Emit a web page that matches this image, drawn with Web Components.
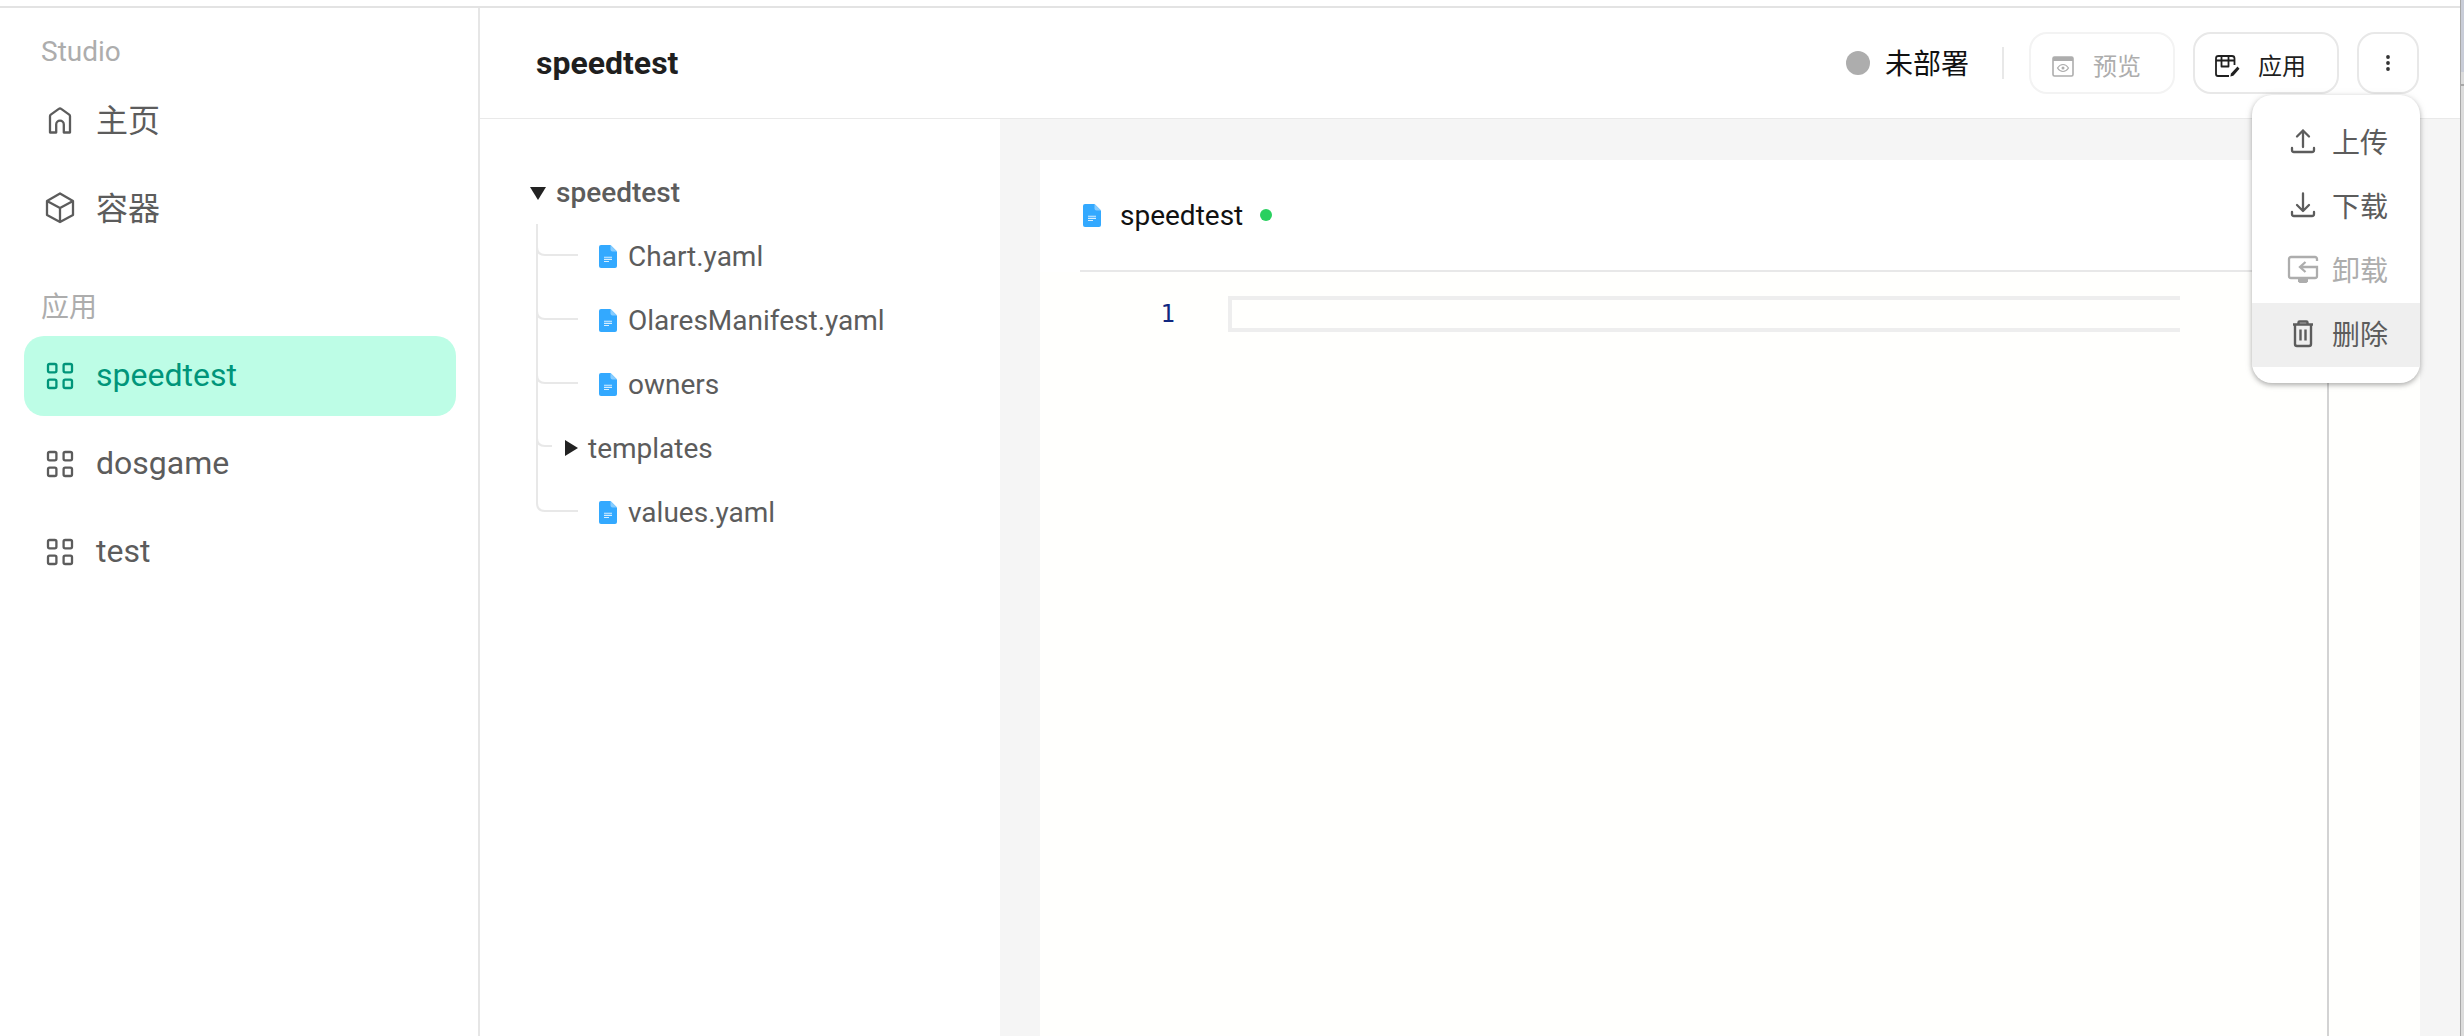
<!DOCTYPE html>
<html lang="zh">
<head>
<meta charset="utf-8">
<title>Studio</title>
<style>
html,body{margin:0;padding:0;height:100%;background:#fff;overflow:hidden}
body{font-family:Roboto,"Noto Sans CJK SC",sans-serif;color:#5c5c5c}
</style>
</head>
<body>
<app-shell>
  <side-bar slot="side">
    <nav-label first>Studio</nav-label>
    <nav-item icon="home" cjk>主页</nav-item>
    <nav-item icon="cube" cjk>容器</nav-item>
    <nav-label>应用</nav-label>
    <nav-item icon="grid" active>speedtest</nav-item>
    <nav-item icon="grid">dosgame</nav-item>
    <nav-item icon="grid">test</nav-item>
  </side-bar>
  <top-header slot="head" title-text="speedtest">
    <status-chip>未部署</status-chip>
    <v-sep></v-sep>
    <tool-button icon="preview" disabled>预览</tool-button>
    <tool-button icon="apply">应用</tool-button>
    <tool-button icon="dots" square></tool-button>
  </top-header>
  <file-tree slot="tree">
    <tree-row kind="open" style="--pad:50px;--gap:10px;font-weight:500">speedtest</tree-row>
    <tree-row kind="file" style="--pad:119px;--gap:11px">Chart.yaml</tree-row>
    <tree-row kind="file" style="--pad:119px;--gap:11px">OlaresManifest.yaml</tree-row>
    <tree-row kind="file" style="--pad:119px;--gap:11px">owners</tree-row>
    <tree-row kind="closed" style="--pad:85px;--gap:10px">templates</tree-row>
    <tree-row kind="file" style="--pad:119px;--gap:11px">values.yaml</tree-row>
  </file-tree>
  <editor-card slot="editor" name="speedtest"></editor-card>
  <action-menu slot="menu">
    <menu-item icon="upload">上传</menu-item>
    <menu-item icon="download">下载</menu-item>
    <menu-item icon="uninstall" disabled>卸载</menu-item>
    <menu-item icon="trash" hover>删除</menu-item>
  </action-menu>
</app-shell>
<script>
const ICONS={
 home:[32,'<path d="M6 28.500V12.200a2 2 0 0 1 .8-1.600l8-5.700a2 2 0 0 1 2.400 0l8 5.700a2 2 0 0 1 .8 1.600v16.300h-6.200v-8a3.600 3.600 0 0 0-7.600 0v8z" fill="none" stroke="currentColor" stroke-width="2.300" stroke-linejoin="round"/>'],
 cube:[32,'<path d="M16 1.500 29 9v14l-13 7-13-7V9zM3 9l13 7 13-7M16 16v14" fill="none" stroke="currentColor" stroke-width="2.300" stroke-linejoin="round"/>'],
 grid:[32,'<g fill="none" stroke="currentColor" stroke-width="2.300"><rect x="4" y="4" width="8.400" height="8.400" rx="1.600"/><rect x="19.600" y="4" width="8.400" height="8.400" rx="1.600"/><rect x="4" y="19.600" width="8.400" height="8.400" rx="1.600"/><rect x="19.600" y="19.600" width="8.400" height="8.400" rx="1.600"/></g>'],
 upload:[32,'<path d="M16 4.500V21M10 10.500l6-6 6 6M5 22v2a2 2 0 0 0 2 2h18a2 2 0 0 0 2-2v-2" fill="none" stroke="currentColor" stroke-width="2.300" stroke-linecap="round" stroke-linejoin="round"/>'],
 download:[32,'<path d="M16 3.500V21M10 15l6 6 6-6M5 22v2a2 2 0 0 0 2 2h18a2 2 0 0 0 2-2v-2" fill="none" stroke="currentColor" stroke-width="2.300" stroke-linecap="round" stroke-linejoin="round"/>'],
 uninstall:[32,'<path d="M30 7V5a2 2 0 0 0-2-2H4a2 2 0 0 0-2 2v17a2 2 0 0 0 2 2h24a2 2 0 0 0 2-2v-9H13M18.500 8l-5.500 5 5.500 5" fill="none" stroke="currentColor" stroke-width="2.300"/><path d="M11 24h10v3.500l-1.500 1.500h-7L11 27.500z" fill="currentColor"/>'],
 trash:[32,'<path d="M6 6.500h20M11.500 6V4.500a1 1 0 0 1 1-1h7a1 1 0 0 1 1 1V6M8 6.500V26a2 2 0 0 0 2 2h12a2 2 0 0 0 2-2V6.500M13.500 11.500v11M18.500 11.500v11" fill="none" stroke="currentColor" stroke-width="2.400"/>'],
 preview:[24,'<rect x="2" y="3" width="20" height="19" rx="1.500" fill="none" stroke="currentColor" stroke-width="1.600"/><path d="M2 4.500A1.500 1.500 0 0 1 3.500 3h17A1.500 1.500 0 0 1 22 4.500V7H2z" fill="currentColor"/><path d="M6.500 14c1.500-2.400 3.300-3.500 5.500-3.500s4 1.100 5.500 3.500c-1.500 2.400-3.300 3.500-5.500 3.500S8 16.400 6.500 14z" fill="none" stroke="currentColor" stroke-width="1.200"/><circle cx="12" cy="14" r="1.500" fill="currentColor"/>'],
 apply:[26,'<path d="M20.500 12V5.500a2.500 2.500 0 0 0-2.500-2.500H4.500A2.500 2.500 0 0 0 2 5.500V21a2 2 0 0 0 2 2h11M2 7.500h18.500M7.500 3v10.500h7V3" fill="none" stroke="currentColor" stroke-width="1.800" stroke-linejoin="round"/><path d="M24.500 13.500l-6.500 7-.7 3 3-.8 6.200-7z" fill="currentColor" transform="translate(-1 0)"/>'],
 dots:[24,'<circle cx="12" cy="6" r="1.900" fill="currentColor"/><circle cx="12" cy="12" r="1.900" fill="currentColor"/><circle cx="12" cy="18" r="1.900" fill="currentColor"/>']
};
const DOC='<svg width="18" height="23" viewBox="0 0 18 23" style="display:block"><path d="M2 0h9.500L18 6.500V21a2 2 0 0 1-2 2H2a2 2 0 0 1-2-2V2a2 2 0 0 1 2-2z" fill="#33a9ff"/><path d="M11.500 0 18 6.500h-4.500a2 2 0 0 1-2-2z" fill="#86ccff"/><path d="M5 12.300h8M5 14.400h8M5 16.500h5" stroke="#d6eeff" stroke-width="1.100"/></svg>';

customElements.define('x-icon',class extends HTMLElement{
  static get observedAttributes(){return ['name'];}
  constructor(){super();this.attachShadow({mode:'open'});}
  attributeChangedCallback(){
    const d=ICONS[this.getAttribute('name')];
    if(!d)return;
    const [s,b]=d;
    this.shadowRoot.innerHTML=`<style>:host{display:block;flex:none;width:${s}px;height:${s}px}svg{display:block}</style><svg width="${s}" height="${s}" viewBox="0 0 ${s} ${s}">${b}</svg>`;
  }
});
function def(name,html,extra){
  const t=document.createElement('template');t.innerHTML=html;
  customElements.define(name,class extends HTMLElement{
    constructor(){super();this.attachShadow({mode:'open'}).appendChild(t.content.cloneNode(true));}
    connectedCallback(){if(extra)extra(this,this.shadowRoot);}
  });
}
const useIcon=(h,r)=>{r.querySelector('x-icon').setAttribute('name',h.getAttribute('icon'));};

def('app-shell',`<style>
:host{display:flex;flex-direction:column;position:relative;width:2464px;height:1036px;overflow:hidden;background:#fff}
.top{flex:none;height:8px;box-sizing:border-box;margin-right:4px;border-bottom:2px solid #e3e3e3}
.row{flex:1;display:flex;min-height:0;margin-right:4px}
.main{flex:1;display:flex;flex-direction:column;min-width:0}
.body{flex:1;display:flex;min-height:0}
.strip{position:absolute;right:0;top:0;bottom:0;width:4px;box-sizing:border-box;border-left:1px solid #a8a8a8;
 background:linear-gradient(#c9cdd8 0 72px,#dcdcdc 72px 84px,#a8a8a8 84px 86px,#dcdcdc 86px)}
</style>
<div class="top"></div>
<div class="row">
  <slot name="side"></slot>
  <div class="main"><slot name="head"></slot><div class="body"><slot name="tree"></slot><slot name="editor"></slot></div></div>
</div>
<div class="strip"></div>
<slot name="menu"></slot>`);

def('side-bar',`<style>
:host{display:flex;flex-direction:column;gap:8px;flex:none;width:480px;box-sizing:border-box;padding:0 22px 0 24px;border-right:2px solid #e6e6e6}
</style><slot></slot>`);

def('nav-label',`<style>
:host{display:block;height:40px;line-height:41px;font-size:28px;color:#adadad;padding-left:17px;margin-top:31px;margin-bottom:1px}
:host([first]){margin-top:23px}
</style><slot></slot>`);

def('nav-item',`<style>
:host{display:flex;align-items:center;gap:20px;height:80px;padding-left:20px;border-radius:20px;font-size:32px;color:#5c5c5c}
:host([active]){background:#bdfde6;color:#00957a}
span{padding-bottom:2px}
:host([cjk]) span{padding-bottom:5px}
</style><x-icon></x-icon><span><slot></slot></span>`,useIcon);

def('top-header',`<style>
:host{display:flex;align-items:center;flex:none;height:111px;box-sizing:border-box;padding:0 41px 0 56px;border-bottom:1px solid #e9e9e9}
.t{flex:1;font-size:32px;font-weight:700;color:#1f1f1f;padding-bottom:1px}
.a{display:flex;align-items:center}
</style><div class="t"></div><div class="a"><slot></slot></div>`,(h,r)=>{r.querySelector('.t').textContent=h.getAttribute('title-text');});

def('status-chip',`<style>
:host{display:flex;align-items:center;gap:15px;font-size:28px;color:#111}
i{width:24px;height:24px;border-radius:50%;background:#adadad}
span{padding-bottom:2px}
</style><i></i><span><slot></slot></span>`);

def('v-sep',`<style>:host{display:block;width:2px;height:32px;background:#e8e8e8;margin:0 25px 0 33px}</style>`);

def('tool-button',`<style>
:host{display:flex;align-items:center;justify-content:center;gap:18px;width:146px;height:62px;box-sizing:border-box;padding-right:12px;border:2px solid #e8e8e8;border-radius:18px;font-size:24px;color:#1f1f1f;margin-right:18px}
:host([disabled]){color:#adadad;border-color:#f3f3f3}
:host([square]){width:62px;margin-right:0;color:#333;padding-right:0}
span{padding-top:3px}
x-icon{margin-top:5px}
:host([square]) x-icon{margin-top:0}
:host([square]) span{display:none}
</style><x-icon></x-icon><span><slot></slot></span>`,useIcon);

def('file-tree',`<style>
:host{display:block;position:relative;flex:none;width:520px;box-sizing:border-box;padding-top:41px;background:#fff}
svg{position:absolute;left:0;top:1px}
</style><svg width="120" height="420" fill="none" stroke="#e8e8e8" stroke-width="2">
<path d="M57 104V383q0 8 8 8H98M57 127q0 8 8 8H98M57 191q0 8 8 8H98M57 255q0 8 8 8H98M57 318q0 8 8 8H72"/>
</svg><slot></slot>`);

def('tree-row',`<style>
:host{display:flex;align-items:center;height:64px;padding-left:var(--pad);gap:var(--gap);font-size:28px;color:#5c5c5c;position:relative}
.m{display:block;flex:none}
</style><span class="m"></span><span><slot></slot></span>`,(h,r)=>{
  const k=h.getAttribute('kind'),m=r.querySelector('.m');
  if(k==='file')m.innerHTML=DOC;
  if(k==='open')m.innerHTML='<svg width="16" height="13" style="display:block;margin-top:3px"><path d="M0 0h16L8 13z" fill="#222"/></svg>';
  if(k==='closed')m.innerHTML='<svg width="13" height="16" style="display:block"><path d="M0 0l13 8-13 8z" fill="#222"/></svg>';
});

def('editor-card',`<style>
:host{display:flex;flex:1;min-width:0;box-sizing:border-box;padding:41px 40px 0 40px;background:#f5f5f5}
.card{flex:1;display:flex;flex-direction:column;background:#fff;position:relative;min-width:0}
.head{flex:none;display:flex;align-items:center;height:110px;margin:0 40px;border-bottom:2px solid #e8e8e8;font-size:28px;color:#111;padding-left:3px}
.doc{margin-right:19px}
.dot{width:12px;height:12px;border-radius:50%;background:#29d05f;margin-left:17px}
.ed{flex:1;background:#fffffd;padding-top:24px;display:flex;align-items:flex-start}
.num{width:135px;text-align:right;font:24px/36px "DejaVu Sans Mono",monospace;color:#11277f}
.line{margin-left:53px;width:952px;height:36px;box-sizing:border-box;border:4px solid #eeeeee;border-right:0}
.ruler{position:absolute;left:1287px;top:112px;bottom:0;width:2px;background:#d3d3d3}
</style><div class="card">
<div class="head"><span class="doc"></span><span class="n"></span><i class="dot"></i></div>
<div class="ed"><div class="num">1</div><div class="line"></div></div>
<div class="ruler"></div>
</div>`,(h,r)=>{r.querySelector('.doc').innerHTML=DOC;r.querySelector('.n').textContent=h.getAttribute('name');});

def('action-menu',`<style>
:host{display:block;position:absolute;left:2252px;top:95px;width:168px;padding:16px 0;background:#fff;border-radius:20px;box-shadow:0 2px 5px rgba(0,0,0,.28),0 1px 10px rgba(0,0,0,.08)}
</style><slot></slot>`);

def('menu-item',`<style>
:host{display:flex;align-items:center;justify-content:flex-end;gap:13px;height:64px;box-sizing:border-box;padding-right:32px;padding-bottom:2px;font-size:28px;color:#5c5c5c}
:host([disabled]){color:#adadad}
:host([hover]){background:#efefef}
span{padding-bottom:3px}
</style><x-icon></x-icon><span><slot></slot></span>`,useIcon);
</script>
</body>
</html>
